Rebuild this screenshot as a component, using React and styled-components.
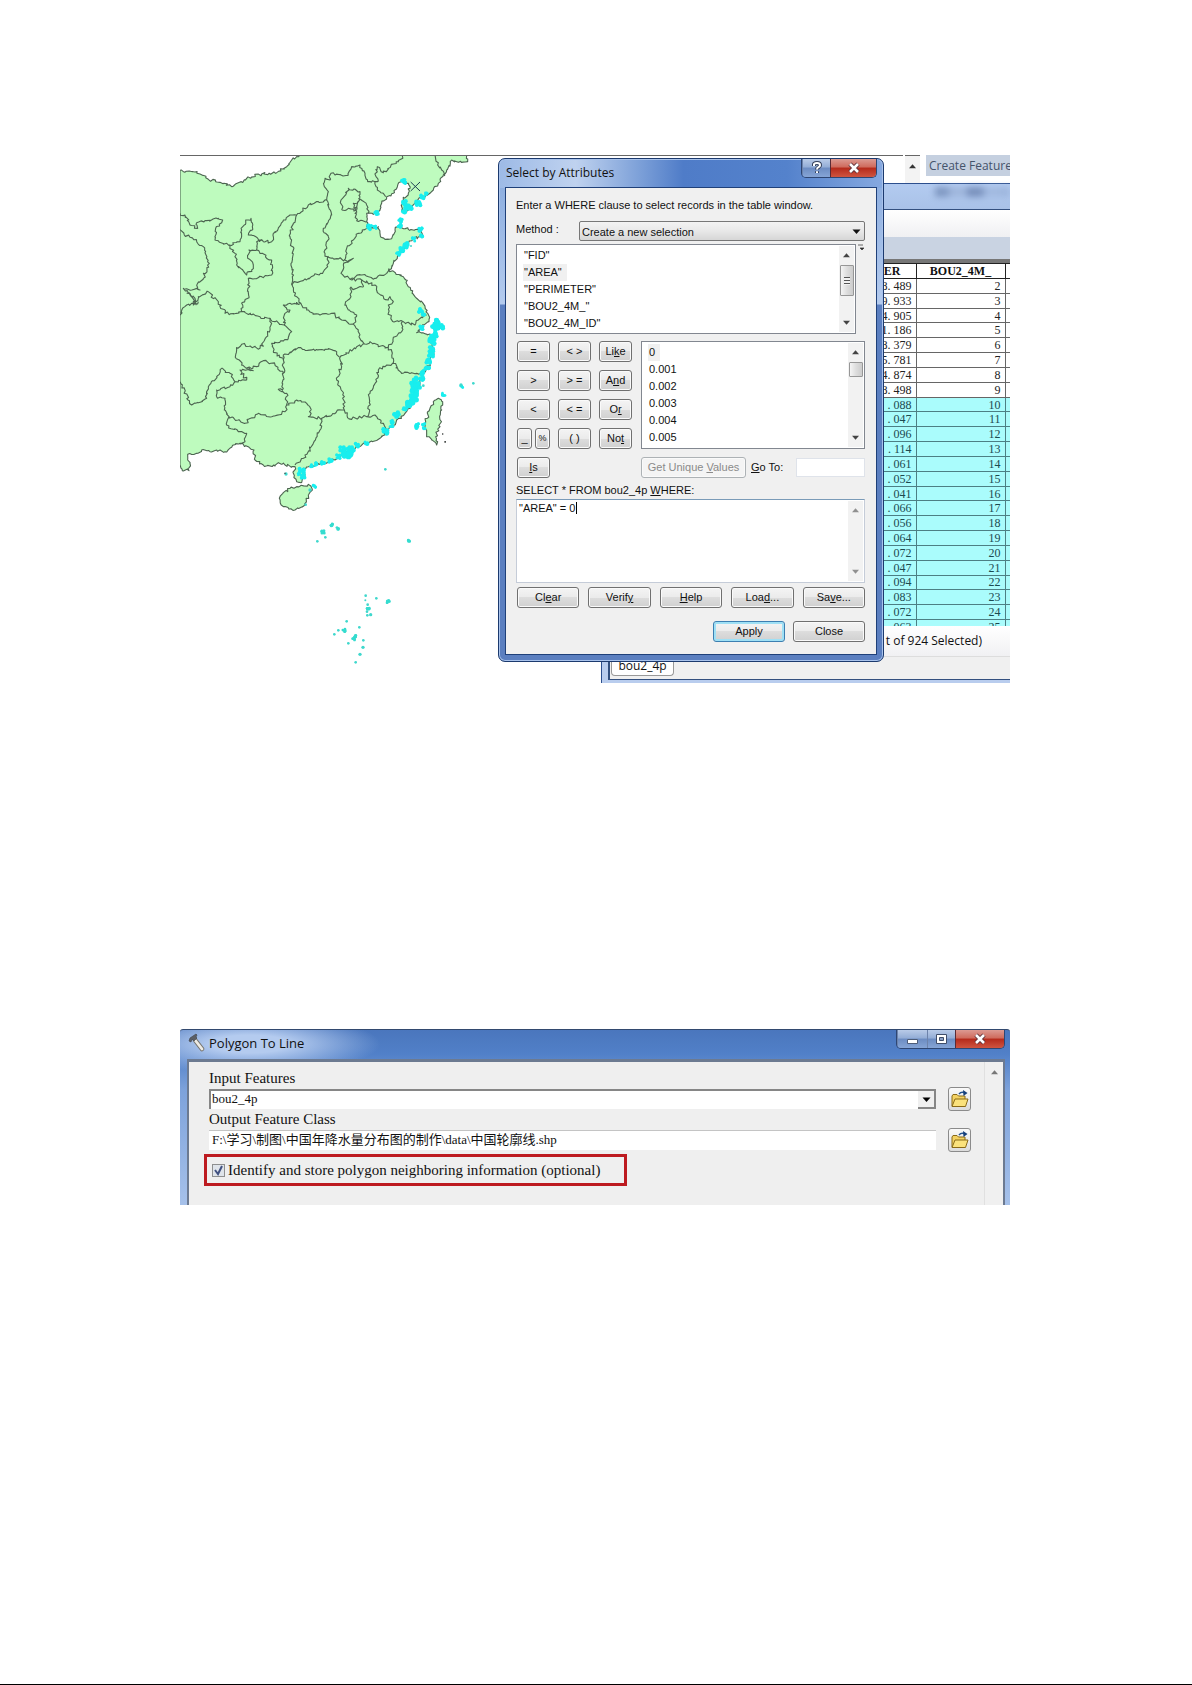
import { useState } from "react"
import styled, { createGlobalStyle, css } from "styled-components";

const campos = ['"FID"', '"AREA"', '"PERIMETER"', '"BOU2_4M_"', '"BOU2_4M_ID"']
const valores = ["0", "0.001", "0.002", "0.003", "0.004", "0.005"]
const linhas = ["8. 489", "9. 933", "4. 905", "1. 186", "8. 379", "5. 781", "4. 874", "8. 498",
    ". 088", ". 047", ". 096", ". 114", ". 061", ". 052", ". 041", ". 066", ". 056", ". 064",
    ". 072", ". 047", ". 094", ". 083", ". 072", ". 063"]

export default function App() {
    return (
        <>
            <GlobalStyle />
            <Page>
                <Desktop>
                    <Map />
                    <TopLine />
                    <CreateFeatures />
                    <AttributeTable />
                    <SelectDialog />
                </Desktop>
                <PolygonToLine />
            </Page>
        </>
    )
}

/* ---------- map ---------- */

// each border is a list of x,y pairs
const land = "15,62 60,66 75,72 100,88 135,97 170,110 215,85 260,72 305,68 335,50 350,30 375,15 875,15 878,35 850,37 830,30 815,60 805,75 790,100 775,120 765,130 740,140 715,165 690,187 680,180 685,150 700,130 705,115 700,100 685,92 670,100 655,130 635,140 620,160 610,185 595,193 575,190 575,215 580,232 610,230 618,262 630,268 650,266 660,240 675,230 700,238 740,240 740,260 715,265 690,290 670,315 655,340 642,360 685,380 700,410 720,440 750,470 758,490 762,515 740,530 725,548 765,552 775,570 775,600 765,640 740,670 735,700 720,730 715,755 705,765 690,790 665,810 650,830 635,845 615,865 580,878 545,890 520,905 480,930 440,940 400,950 385,955 388,985 378,998 365,995 355,970 360,950 330,945 310,938 300,948 265,945 240,930 237,900 195,880 170,892 150,905 125,900 105,905 80,900 65,910 40,912 38,930 45,940 42,962 22,962 15,940"
const hainan = "345,1015 365,1010 400,1003 412,1020 400,1035 390,1065 360,1080 325,1070 313,1045 325,1028"
const taiwan = "790,745 803,755 800,780 795,830 782,860 785,885 770,870 755,855 752,815 765,775 775,755"
const borders = [
    "780,15 788,45 800,60 808,78",
    "690,15 670,35 655,42 625,68 607,50 603,80 608,95 600,95 607,120 625,130 632,140",
    "600,95 578,95 570,70 555,45 530,50 520,75 480,75 468,70 465,90 450,85 448,110 460,125 455,150 430,155 400,165 375,190 365,195 345,195 325,210 310,235 295,250 290,275 265,275 245,262 220,255 232,230 228,205 212,210 200,240 195,275 160,285 120,270 122,235 143,210 130,205 90,212 65,218 68,235 45,225 30,195 15,190",
    "365,195 355,220 345,260 355,300 348,340 352,380 350,402 365,440 378,460",
    "455,150 468,185 460,215 445,235 460,260 450,310 458,320 458,350 445,365 400,385 350,402",
    "500,180 498,150 512,135 520,115 555,125 550,155 535,160 545,180 520,175 500,180",
    "550,145 560,150 575,165 580,190",
    "548,155 540,190 545,212 575,215",
    "575,235 550,250 535,270 515,295 508,330",
    "458,318 508,330 520,335 535,325 505,345 498,370 525,388 560,375 600,385 635,370 642,355",
    "525,388 560,390 565,410 545,415 525,415 528,440 512,455 520,480 545,495 535,522",
    "560,390 600,405 610,430 640,450 645,440 655,455 640,465 640,490 655,515 685,515 720,525 730,510 755,495",
    "378,460 395,480 430,492 470,490 500,510 535,522 550,540 552,560 568,582",
    "378,460 345,460 325,465 345,480 330,490 328,525 300,515 285,505 255,500 200,485 185,490 150,490 130,455 100,425 70,440 60,460 35,465 15,495",
    "160,285 180,310 185,345 215,375 230,360 235,345 218,325 222,300 245,300 290,330 290,375 260,380 220,385 222,440 200,460 200,485",
    "245,300 245,275 260,268",
    "15,240 45,262 85,290 103,340 85,385 65,405 75,420 25,415 50,440 62,465",
    "35,430 60,445 55,465 70,455",
    "285,505 290,520 275,560 255,595 200,583 185,600 183,625 215,655 245,650 265,632 300,645 325,670",
    "328,525 350,545 340,565 290,580 295,605 325,630",
    "325,630 325,615 370,593 420,602 450,598 485,605 495,622",
    "325,630 325,715 310,718 335,730 335,765",
    "495,622 500,650 485,690 505,730 508,780",
    "495,622 545,590 568,582 585,575 610,590 640,592",
    "640,592 660,560 680,545 682,515",
    "640,592 655,625 655,640 680,670 710,668 735,670",
    "655,640 610,660 605,695 585,730 578,800",
    "215,655 235,662 195,660 215,690 180,695 165,670 140,655 125,680 100,710 95,745 50,765 15,695",
    "180,695 165,710 125,720 125,740 150,745 148,780 162,800 155,825 190,845 215,850 210,875 195,880",
    "162,800 210,820 250,790 290,800 330,785 335,765 365,750 395,760 408,780 400,800 440,805 500,780 508,780",
    "508,780 520,805 575,800 600,795 625,820 630,840",
    "440,805 435,840 415,880 385,925 360,945",
]
// selected islands: x, y, spread
const coast = [
    [685, 93, 8], [692, 98, 5], [605, 188, 8], [585, 232, 9], [600, 232, 6], [690, 160, 11], [690, 180, 11], [705, 172, 9], [730, 160, 10], [742, 140, 9], [755, 132, 6],
    [677, 212, 8], [675, 228, 8], [735, 240, 8], [738, 258, 7], [715, 268, 7], [695, 285, 11], [682, 300, 10], [670, 312, 7], [708, 288, 2],
    [735, 482, 9], [745, 490, 8], [738, 533, 8], [785, 518, 12], [795, 530, 12], [780, 535, 12], [777, 555, 12], [772, 575, 12], [770, 598, 10], [768, 615, 10], [760, 635, 10],
    [757, 652, 10], [742, 668, 9], [738, 685, 10], [722, 690, 11], [715, 705, 12], [728, 705, 11], [718, 725, 12], [715, 745, 14], [705, 760, 14], [690, 780, 9], [665, 795, 11], [652, 815, 7], [630, 845, 11], [650, 828, 7],
    [575, 880, 7], [545, 886, 8], [530, 898, 10], [502, 898, 10], [516, 910, 15], [525, 905, 12], [490, 920, 8], [465, 930, 9], [445, 937, 8], [425, 942, 7], [410, 947, 6],
    [380, 962, 10], [384, 978, 9], [372, 972, 5], [418, 1009, 6], [405, 1020, 4], [392, 1064, 3],
    [726, 830, 8], [727, 822, 6], [746, 822, 6], [748, 835, 6], [806, 733, 6], [860, 710, 6], [858, 705, 4], [895, 700, 3], [745, 707, 3],
    [333, 972, 4], [631, 958, 3], [470, 1125, 6], [488, 1136, 5], [445, 1146, 7], [451, 1162, 3], [427, 1174, 3], [702, 1172, 5],
    [572, 1337, 3], [571, 1351, 2], [604, 1345, 3], [640, 1354, 6], [578, 1364, 3], [580, 1376, 6], [576, 1385, 3], [577, 1396, 3], [587, 1394, 4],
    [515, 1414, 3], [553, 1432, 3], [490, 1441, 3], [507, 1441, 6], [478, 1453, 3], [540, 1460, 6], [536, 1468, 5], [565, 1471, 3], [520, 1480, 3], [564, 1492, 4], [555, 1513, 4], [542, 1537, 3],
]

function noise(n) {
    const s = Math.sin(n * 127.1 + 11.7) * 43758.5453
    return s - Math.floor(s) - 0.5
}

// breaks every segment in short crooked steps
function rough(text, closed) {
    const pts = text.split(" ").map(p => p.split(",").map(Number))
    if (closed) pts.push(pts[0])
    let d = `M${pts[0][0]} ${pts[0][1]}`
    for (let i = 1; i < pts.length; i++) {
        const [x0, y0] = pts[i - 1]
        const [x1, y1] = pts[i]
        const straight = (y0 === 15 && y1 === 15) || (x0 === 15 && x1 === 15)
        const steps = straight ? 1 : Math.max(1, Math.round(Math.hypot(x1 - x0, y1 - y0) / 6))
        for (let k = 1; k <= steps; k++) {
            const t = k / steps
            const amp = k === steps ? 0 : 9
            const x = x0 + (x1 - x0) * t + noise(x0 + y0 * 3 + k) * amp
            const y = y0 + (y1 - y0) * t + noise(x1 * 2 + y1 + k * 5) * amp
            d += `L${x.toFixed(1)} ${y.toFixed(1)}`
        }
    }
    return closed ? d + "Z" : d
}

function Map() {
    return (
        <MapSvg viewBox="15 15 960 1584" role="img" aria-label="bou2_4p">
            <g fill="#befbbe" stroke="#4c6450" strokeWidth="3.3" strokeLinejoin="round">
                <path d={rough(land, true)} />
                <path d={rough(hainan, true)} />
                <path d={rough(taiwan, true)} />
                {borders.map(b => <path key={b} d={rough(b)} fill="none" />)}
            </g>
            <g fill="#19eeee">
                {coast.map(([x, y, r], i) => r < 5
                    ? <circle key={i} cx={x} cy={y} r={r + 1} fill="#3fd8cd" />
                    : [0, 1, 2, 3, 4, 5, 6].map(k => (
                        <circle key={`${i}-${k}`} cx={x + noise(x + k * 3) * r * 1.4} cy={y + noise(y + k * 7) * r * 1.4} r={r * 0.5 + 1} fill={y > 1100 ? "#35dccf" : "#19eeee"} />
                    )))}
            </g>
            <path d="M707 96L735 123M735 96L707 123" stroke="#1d3f52" strokeWidth="3" />
            <path d="M801 850h4v4h-4zM808 873h5v5h-5zM328 968h4v4h-4z" fill="#4b4f4d" />
        </MapSvg>
    )
}

/* ---------- shared parts ---------- */

function Arrow({ up, small }) {
    return (
        <svg width={small ? 7 : 9} height="5" viewBox="0 0 8 5" aria-hidden="true">
            <path d={up ? "M4 0L8 4.500H0Z" : "M0 .5H8L4 5Z"} fill="currentColor" />
        </svg>
    )
}

function Scroll({ thumb, grip, pale }) {
    return (
        <Track $pale={pale}>
            <Arrow up small />
            {thumb ? <Thumb $size={thumb}>{grip && <Grip />}</Thumb> : null}
            <Spacer />
            <Arrow small />
        </Track>
    )
}

/* ---------- windows behind ---------- */

function CreateFeatures() {
    return (
        <SidePanel>
            <SideScroll><Arrow up small /></SideScroll>
            <SideTitle>Create Features</SideTitle>
        </SidePanel>
    )
}

function AttributeTable() {
    return (
        <TableWindow>
            <TableTitle><Smudge /></TableTitle>
            <TableInner>
                <TableTools />
                <TableStrip />
                <TableClip>
                    <Grid>
                        <thead>
                            <tr><th>PERIMETER</th><th>BOU2_4M_</th><th aria-label="more"></th></tr>
                        </thead>
                        <tbody>
                            {linhas.map((valor, i) => (
                                <Row key={i} $selected={i > 7}>
                                    <td>{valor}</td><td>{i + 2}</td><td></td>
                                </Row>
                            ))}
                        </tbody>
                    </Grid>
                </TableClip>
                <TableStatus>t of 924 Selected)</TableStatus>
                <TableTabs><Tab type="button">bou2_4p</Tab></TableTabs>
            </TableInner>
        </TableWindow>
    )
}

/* ---------- select by attributes ---------- */

function SelectDialog() {
    const [sql, setSql] = useState('"AREA" = 0')
    const [goTo, setGoTo] = useState("")

    return (
        <Dialog>
            <DialogTitle>
                <h1>Select by Attributes</h1>
                <WinButtons>
                    <WinButton type="button" $w={28} aria-label="Help">
                        <svg width="12" height="14" viewBox="0 0 12 14"><path d="M3 5V3.500Q3 2 6 2T9 4.200Q9 5.500 7.500 6.200T6 8.500M6 10.200V12" fill="none" stroke="#34405a" strokeWidth="4" /><path d="M3 5V3.500Q3 2 6 2T9 4.200Q9 5.500 7.500 6.200T6 8.500M6 10.200V12" fill="none" stroke="#fff" strokeWidth="2" /></svg>
                    </WinButton>
                    <WinButton type="button" $w={46} $close aria-label="Close"><CloseMark /></WinButton>
                </WinButtons>
            </DialogTitle>
            <DialogBody>
                <p>Enter a WHERE clause to select records in the table window.</p>
                <MethodRow>
                    <label htmlFor="method">Method :</label>
                    <SelectWrap>
                        <select id="method"><option>Create a new selection</option></select>
                        <Arrow />
                    </SelectWrap>
                </MethodRow>
                <FieldRow>
                    <ListBox $h={90}>
                        <ul>{campos.map(c => <Item key={c} $marked={c === '"AREA"'}>{c}</Item>)}</ul>
                        <Scroll thumb={31} grip />
                    </ListBox>
                    <svg width="8" height="8" viewBox="0 0 8 8" aria-hidden="true"><path d="M1 1H6M3 4H7L5 6Z" stroke="#444" fill="#222" strokeWidth=".8" /></svg>
                </FieldRow>
                <Middle>
                    <Keys>
                        <Button type="button">=</Button><Button type="button">&lt; &gt;</Button><Button type="button">Li<u>k</u>e</Button>
                        <Button type="button">&gt;</Button><Button type="button">&gt; =</Button><Button type="button">A<u>n</u>d</Button>
                        <Button type="button">&lt;</Button><Button type="button">&lt; =</Button><Button type="button">O<u>r</u></Button>
                        <Pair><Button type="button">_</Button><Button type="button" $small>%</Button></Pair>
                        <Button type="button">( )</Button><Button type="button">No<u>t</u></Button>
                        <Button type="button"><u>I</u>s</Button>
                    </Keys>
                    <Values>
                        <ListBox $h={108}>
                            <ul>{valores.map(v => <Item key={v} $marked={v === "0"}>{v}</Item>)}</ul>
                            <Scroll thumb={15} />
                        </ListBox>
                        <GoRow>
                            <Button type="button" disabled $w={105}>Get Unique <u>V</u>alues</Button>
                            <label htmlFor="goto"><u>G</u>o To:</label>
                            <GoInput id="goto" value={goTo} onChange={e => setGoTo(e.target.value)} />
                        </GoRow>
                    </Values>
                </Middle>
                <SqlLabel htmlFor="sql">SELECT * FROM bou2_4p <u>W</u>HERE:</SqlLabel>
                <SqlBox>
                    <textarea id="sql" value={sql} onChange={e => setSql(e.target.value)} />
                    <Caret />
                    <Scroll pale />
                </SqlBox>
                <Actions>
                    <Button type="button">Cl<u>e</u>ar</Button>
                    <Button type="button">Verif<u>y</u></Button>
                    <Button type="button"><u>H</u>elp</Button>
                    <Button type="button">Loa<u>d</u>...</Button>
                    <Button type="button">Sa<u>v</u>e...</Button>
                </Actions>
                <Closing>
                    <Button type="button" $w={72} $main>Apply</Button>
                    <Button type="button" $w={72}>Close</Button>
                </Closing>
            </DialogBody>
        </Dialog>
    )
}

function CloseMark() {
    return (
        <svg width="14" height="12" viewBox="0 0 14 12" aria-hidden="true">
            <path d="M3 2L11 10M11 2L3 10" stroke="#5b3038" strokeWidth="4.500" />
            <path d="M3 2L11 10M11 2L3 10" stroke="#fff" strokeWidth="2.600" />
        </svg>
    )
}

/* ---------- polygon to line ---------- */

function PolygonToLine() {
    const [saida, setSaida] = useState("F:\\学习\\制图\\中国年降水量分布图的制作\\data\\中国轮廓线.shp")
    const [marcado, setMarcado] = useState(true)

    return (
        <ToolWindow>
            <ToolTitle>
                <svg width="18" height="19" viewBox="0 0 18 19" aria-hidden="true">
                    <path d="M7 7L14 16" stroke="#77756f" strokeWidth="4.500" strokeLinecap="round" />
                    <path d="M7 7L14 16" stroke="#eeebe4" strokeWidth="2.800" strokeLinecap="round" />
                    <path d="M1 8L2 5L5 3L8 1L9 2L8 4L9 5L6 8L4 6L3 9Z" fill="#5c5f65" stroke="#3c3f44" strokeWidth=".6" />
                </svg>
                <h2>Polygon To Line</h2>
                <WinButtons>
                    <WinButton type="button" $w={30} aria-label="Minimize">
                        <svg width="13" height="12" viewBox="0 0 13 12"><path d="M1.500 6.500H11.500V10.500H1.500Z" fill="#fff" stroke="#4d5c78" /></svg>
                    </WinButton>
                    <WinButton type="button" $w={28} aria-label="Maximize">
                        <svg width="13" height="12" viewBox="0 0 13 12"><path d="M1.500 1.500H11.500V10.500H1.500Z" fill="#fff" stroke="#3f4d69" /><path d="M4.500 4.500H8.500V7.500H4.500Z" fill="#8a9fc4" stroke="#3f4d69" /></svg>
                    </WinButton>
                    <WinButton type="button" $w={49} $close aria-label="Close"><CloseMark /></WinButton>
                </WinButtons>
            </ToolTitle>
            <ToolBody>
                <Form>
                    <FieldLabel htmlFor="entrada">Input Features</FieldLabel>
                    <FileRow>
                        <SunkenSelect>
                            <select id="entrada"><option>bou2_4p</option></select>
                            <DropMark><Arrow /></DropMark>
                        </SunkenSelect>
                        <FolderButton />
                    </FileRow>
                    <FieldLabel htmlFor="saida">Output Feature Class</FieldLabel>
                    <FileRow>
                        <FileInput id="saida" value={saida} onChange={e => setSaida(e.target.value)} />
                        <FolderButton />
                    </FileRow>
                    <RedBox>
                        <input type="checkbox" id="vizinhos" checked={marcado} onChange={e => setMarcado(e.target.checked)} />
                        <label htmlFor="vizinhos">Identify and store polygon neighboring information (optional)</label>
                    </RedBox>
                </Form>
                <ToolScroll><Arrow up small /></ToolScroll>
            </ToolBody>
        </ToolWindow>
    )
}

function FolderButton() {
    return (
        <Folder type="button" aria-label="Browse">
            <svg width="18" height="18" viewBox="0 0 18 18">
                <path d="M1 16V6L2 4.500H6L7.500 6H14V9" fill="#f3d263" stroke="#8a6a17" />
                <path d="M1 16.500L4 9H17L14.500 16.500Z" fill="#fbe27c" stroke="#8a6a17" />
                <path d="M8 4Q10 1.500 13 2.500" fill="none" stroke="#23528f" strokeWidth="1.500" />
                <path d="M12 0L16.500 3L12.500 6Z" fill="#16407c" />
            </svg>
        </Folder>
    )
}

/* ---------- styles ---------- */

const GlobalStyle = createGlobalStyle`
    *{
        box-sizing: border-box;
    }
    body{
        margin: 0;
        background-color: #ffffff;
        color: #111111;
    }
    h1, h2, p, ul{
        margin: 0;
        padding: 0;
        font-weight: normal;
        list-style: none;
    }
    button, input, select, textarea{
        font: inherit;
        color: inherit;
        margin: 0;
    }
    svg{
        display: block;
        flex-shrink: 0;
    }
`

const Page = styled.main`
    min-height: 100vh;
    padding: 155px 182px 0 180px;
    display: flex;
    flex-direction: column;
    gap: 346px;
    border-bottom: 1px solid #000000;
`

const Desktop = styled.section`
    position: relative;
    min-height: 528px;
    overflow: hidden;
`

const MapSvg = styled.svg`
    width: 320px;
    height: 528px;
`

const TopLine = styled.div`
    position: absolute;
    top: 0;
    left: 0;
    right: 107px;
    height: 1px;
    background-color: #666666;
`

const SidePanel = styled.aside`
    position: absolute;
    top: 0;
    right: 0;
    width: 105px;
    height: 30px;
    display: flex;
    align-items: flex-start;
    gap: 6px;
`

const SideScroll = styled.div`
    width: 15px;
    height: 30px;
    padding-top: 8px;
    display: flex;
    justify-content: center;
    background-color: #f3f3f3;
    border-top: 1px solid #666666;
    color: #333333;
`

const SideTitle = styled.div`
    flex: 1;
    height: 21px;
    padding-left: 3px;
    overflow: hidden;
    white-space: nowrap;
    background-color: #c5d0e0;
    color: #44536b;
    font: 12px/21px "Open Sans", sans-serif;
`

const TableWindow = styled.section`
    position: absolute;
    top: 28px;
    bottom: 0;
    left: 421px;
    right: 0;
    display: flex;
    flex-direction: column;
    padding: 0 0 3px 6px;
    border-left: 1px solid #2c4f8e;
    border-top: 1px solid #2c4f8e;
    background-color: #b9cdee;
`

const TableTitle = styled.div`
    height: 25px;
    display: flex;
    justify-content: flex-end;
    background: linear-gradient(#b3cbf0, #a9c2e8);
`

const Smudge = styled.div`
    width: 75px;
    height: 10px;
    margin-top: 3px;
    filter: blur(3px);
    background: linear-gradient(90deg, #7f98c2 15%, #9fb6dc 22%, #9fb6dc 40%, #7890bc 45%, #7890bc 60%, #a3bbe2 70%, #9db5dc);
`

const TableInner = styled.div`
    flex: 1;
    display: flex;
    flex-direction: column;
    border: 2px solid #33507f;
    border-top-width: 1px;
    border-right: none;
    border-bottom-width: 1px;
    background-color: #f0f0f0;
`

const TableTools = styled.div`
    height: 27px;
    background: linear-gradient(#ffffff, #f0f0f2);
`

const TableStrip = styled.div`
    height: 26px;
    background-color: #c9d3e2;
    border-bottom: 4px solid #777777;
`

const TableClip = styled.div`
    height: 363px;
    overflow: hidden;
`

const Grid = styled.table`
    width: 100%;
    height: 372px;
    table-layout: fixed;
    border-collapse: collapse;
    background-color: #ffffff;
    font: 12px/12px "Liberation Serif", serif;
    th, td{
        padding: 0 4px;
        border: 1px solid #666666;
        text-align: right;
    }
    th{
        height: 15px;
        text-align: center;
        border-color: #222222;
    }
    th:first-child{
        text-align: right;
        padding-right: 15px;
    }
    th:nth-child(2){
        width: 89px;
    }
    th:last-child{
        width: 5px;
        padding: 0;
        border-right: none;
    }
    td:last-child{
        padding: 0;
        border-right: none;
    }
`

const Row = styled.tr`
    background-color: ${props => props.$selected ? "#aafcfc" : "#ffffff"};
    color: ${props => props.$selected ? "#1c4a50" : "#222222"};
    td{
        border-color: ${props => props.$selected ? "#4c7f84" : "#666666"};
    }
`

const TableStatus = styled.div`
    height: 31px;
    padding-right: 28px;
    text-align: right;
    border-bottom: 1px solid #dddddd;
    background: linear-gradient(#ffffff, #f1f1f3);
    font: 12px/30px "Open Sans", sans-serif;
`

const TableTabs = styled.div`
    flex: 1;
    padding-left: 1px;
    display: flex;
    align-items: flex-start;
`

const Tab = styled.button`
    height: 19px;
    width: 63px;
    padding: 0;
    border: 1px solid #999999;
    border-top: none;
    border-radius: 0 0 4px 4px;
    background-color: #ffffff;
    font: 12px/18px "Open Sans", sans-serif;
`

const Dialog = styled.section`
    position: absolute;
    top: 3px;
    left: 318px;
    width: 386px;
    padding: 0 6px 6px;
    border: 1px solid #1c3a6e;
    border-radius: 7px;
    box-shadow: inset 0 0 0 1px #a9c3ec;
    background: linear-gradient(90deg, #9dbae6, #bfd2ef 20%, #7fa2d9 36%, #4f7cc8 48%, #5482cc 75%, #86a9e0) 0 0 / 100% 29px no-repeat,
        linear-gradient(#86a9dd, #b4cbee 145px, #5b7fc0 146px, #5b7fc0);
    font: 11px/15px "Liberation Sans", sans-serif;
`

const DialogTitle = styled.header`
    height: 28px;
    display: flex;
    justify-content: space-between;
    align-items: flex-start;
    h1{
        padding-left: 1px;
        font: 12px/28px "Open Sans", sans-serif;
    }
`

const WinButtons = styled.div`
    margin-left: auto;
    display: flex;
    border: 1px solid #2e4673;
    border-top: none;
    border-radius: 0 0 5px 5px;
    overflow: hidden;
`

const WinButton = styled.button`
    width: ${props => props.$w}px;
    height: 18px;
    padding: 0;
    display: flex;
    justify-content: center;
    align-items: center;
    border: none;
    border-left: ${props => props.$close ? "1px solid #5a2b35" : "1px solid #6d83ab"};
    background: ${props => props.$close
        ? "linear-gradient(#dc9a92, #cf6a5c 45%, #b52a1b 50%, #cf5540)"
        : "linear-gradient(#b9cbe8, #93add6 45%, #6c8cc2 50%, #86a5d6)"};
`

const DialogBody = styled.div`
    padding: 10px 11px 12px 10px;
    border: 1px solid #1f4079;
    background-color: #f0f0f0;
    display: flex;
    flex-direction: column;
`

const MethodRow = styled.div`
    margin-top: 8px;
    display: flex;
    label{
        width: 63px;
        line-height: 17px;
    }
`

const SelectWrap = styled.div`
    flex: 1;
    height: 20px;
    display: flex;
    align-items: center;
    padding-right: 3px;
    border: 1px solid #777777;
    border-radius: 2px;
    background: linear-gradient(#f3f3f3, #e8e8e8 50%, #d6d6d6);
    select{
        flex: 1;
        height: 18px;
        padding: 2px 2px 0;
        border: none;
        background: none;
        appearance: none;
    }
`

const FieldRow = styled.div`
    margin: 3px 0 7px;
    display: flex;
    gap: 1px;
`

const ListBox = styled.div`
    flex: 1;
    height: ${props => props.$h}px;
    padding: 1px;
    display: flex;
    border: 1px solid #828790;
    background-color: #ffffff;
    ul{
        flex: 1;
        padding: 1px 5px;
        line-height: 17px;
    }
`

const Item = styled.li`
    width: fit-content;
    padding: 0 5px 0 1px;
    background-color: ${props => props.$marked ? "#f0f0f0" : "transparent"};
`

const Track = styled.div`
    width: 15px;
    padding: 7px 0;
    display: flex;
    flex-direction: column;
    align-items: center;
    background-color: #f2f2f2;
    color: ${props => props.$pale ? "#909090" : "#444444"};
`

const Thumb = styled.div`
    width: 14px;
    height: ${props => props.$size}px;
    margin-top: 7px;
    display: flex;
    justify-content: center;
    align-items: center;
    border: 1px solid #979797;
    border-radius: 1px;
    background: linear-gradient(90deg, #f5f5f5, #dddddd 50%, #cccccc);
`

const Grip = styled.div`
    width: 6px;
    height: 8px;
    background: repeating-linear-gradient(#555555 0 1px, #f2f2f2 1px 3px);
`

const Spacer = styled.div`
    flex: 1;
`

const Middle = styled.div`
    display: flex;
    gap: 9px;
`

const Keys = styled.div`
    display: grid;
    grid-template-columns: repeat(3, 33px);
    grid-auto-rows: 21px;
    gap: 8px;
    padding-left: 1px;
`

const Pair = styled.div`
    display: flex;
    gap: 3px;
    button{
        flex: 1;
    }
`

const Button = styled.button`
    width: ${props => props.$w ? `${props.$w}px` : "auto"};
    height: 21px;
    padding: 0;
    white-space: nowrap;
    border: 1px solid #707070;
    border-radius: 3px;
    background: linear-gradient(#f4f4f4, #ebebeb 50%, #dddddd 50%, #d0d0d0);
    box-shadow: inset 0 0 0 1px #fafafa;
    font-size: ${props => props.$small ? "9px" : "11px"};
    ${props => props.$main && css`
        border-color: #3c7fb1;
        box-shadow: inset 0 0 0 2px #9fe0f5;
    `}
    &:disabled{
        color: #8a8a8a;
        border-color: #adb2b5;
        background: #f4f4f4;
    }
`

const Values = styled.div`
    flex: 1;
    display: flex;
    flex-direction: column;
    gap: 8px;
    ${ListBox}{
        flex: none;
    }
`

const GoRow = styled.div`
    display: flex;
    align-items: center;
    gap: 5px;
`

const GoInput = styled.input`
    flex: 0 1 69px;
    min-width: 0;
    height: 19px;
    margin-left: auto;
    border: 1px solid #dfe3ea;
    background-color: #ffffff;
`

const SqlLabel = styled.label`
    margin: 5px 0 1px;
`

const SqlBox = styled.div`
    position: relative;
    height: 84px;
    padding: 1px;
    display: flex;
    border: 1px solid #c5ccd8;
    border-top-color: #7a9bb8;
    background-color: #ffffff;
    textarea{
        flex: 1;
        padding: 0 1px;
        border: none;
        outline: none;
        resize: none;
        background: none;
    }
`

const Caret = styled.span`
    position: absolute;
    top: 2px;
    left: 59px;
    width: 1px;
    height: 12px;
    background-color: #000000;
`

const Actions = styled.div`
    margin-top: 4px;
    padding-left: 1px;
    display: grid;
    grid-template-columns: repeat(5, 1fr);
    gap: 9px;
`

const Closing = styled.div`
    margin-top: 13px;
    display: flex;
    justify-content: flex-end;
    gap: 8px;
`

const ToolWindow = styled.section`
    height: 176px;
    padding: 0 5px 0 7px;
    display: flex;
    flex-direction: column;
    border-top: 1px solid #32496f;
    border-radius: 3px 3px 0 0;
    background: radial-gradient(ellipse 130px 30px at 70px 14px, #b4cbef 30%, transparent),
        linear-gradient(#4a76bd, #5180c8 24px, #7da2db 60px, #a6c1ea);
`

const ToolTitle = styled.header`
    height: 29px;
    padding: 0 0 0 1px;
    display: flex;
    align-items: flex-start;
    gap: 3px;
    > svg{
        margin-top: 3px;
    }
    h2{
        font: 13px/26px "Open Sans", sans-serif;
    }
`

const ToolBody = styled.div`
    flex: 1;
    display: flex;
    border: 2px solid #6c7a91;
    border-top-width: 3px;
    border-bottom: none;
    background-color: #efefef;
    font: 13px/17px "Liberation Serif", "Noto Sans CJK SC", serif;
`

const Form = styled.div`
    flex: 1;
    padding: 8px 13px 0 20px;
`

const FieldLabel = styled.label`
    display: block;
    height: 17px;
    font-size: 15px;
    line-height: 17px;
`

const FileRow = styled.div`
    display: flex;
    align-items: center;
    gap: 12px;
    height: 24px;
`

const SunkenSelect = styled.div`
    flex: 1;
    height: 20px;
    display: flex;
    border: 2px solid #868686;
    border-bottom: none;
    background-color: #ffffff;
    select{
        flex: 1;
        height: 15px;
        padding: 0 1px;
        border: none;
        background: none;
        appearance: none;
        line-height: 15px;
    }
`

const DropMark = styled.span`
    width: 16px;
    display: flex;
    justify-content: center;
    align-items: center;
    background-color: #efefef;
    border-bottom: 2px solid #868686;
    color: #000000;
`

const FileInput = styled.input`
    flex: 1;
    height: 20px;
    padding: 0 3px 4px;
    border: none;
    border-top: 1px solid #c4c4c4;
    background-color: #ffffff;
`

const Folder = styled.button`
    width: 23px;
    height: 24px;
    padding: 0;
    display: flex;
    justify-content: center;
    align-items: center;
    border: 1px solid #8b8b8b;
    border-radius: 3px;
    background: linear-gradient(#fafafa, #dcdcdc);
`

const RedBox = styled.div`
    width: fit-content;
    height: 32px;
    margin: 2px 0 0 -5px;
    padding: 0 24px 0 5px;
    display: flex;
    align-items: center;
    gap: 3px;
    border: 3px solid #bd1a20;
    font-size: 15px;
    input{
        appearance: none;
        width: 13px;
        height: 13px;
        border: 1px solid #8e8f8f;
        background: #dfe4ea;
    }
    input:checked{
        background: #dfe4ea url("data:image/svg+xml,%3Csvg xmlns='http://www.w3.org/2000/svg' viewBox='0 0 11 11'%3E%3Cpath d='M2 5l3 4 4-8' fill='none' stroke='%23405080' stroke-width='2'/%3E%3C/svg%3E") center no-repeat;
    }
`

const ToolScroll = styled.div`
    width: 19px;
    padding-top: 8px;
    display: flex;
    justify-content: center;
    align-items: flex-start;
    border-left: 1px solid #e0e0e0;
    background-color: #f0f0f0;
    color: #777777;
`
